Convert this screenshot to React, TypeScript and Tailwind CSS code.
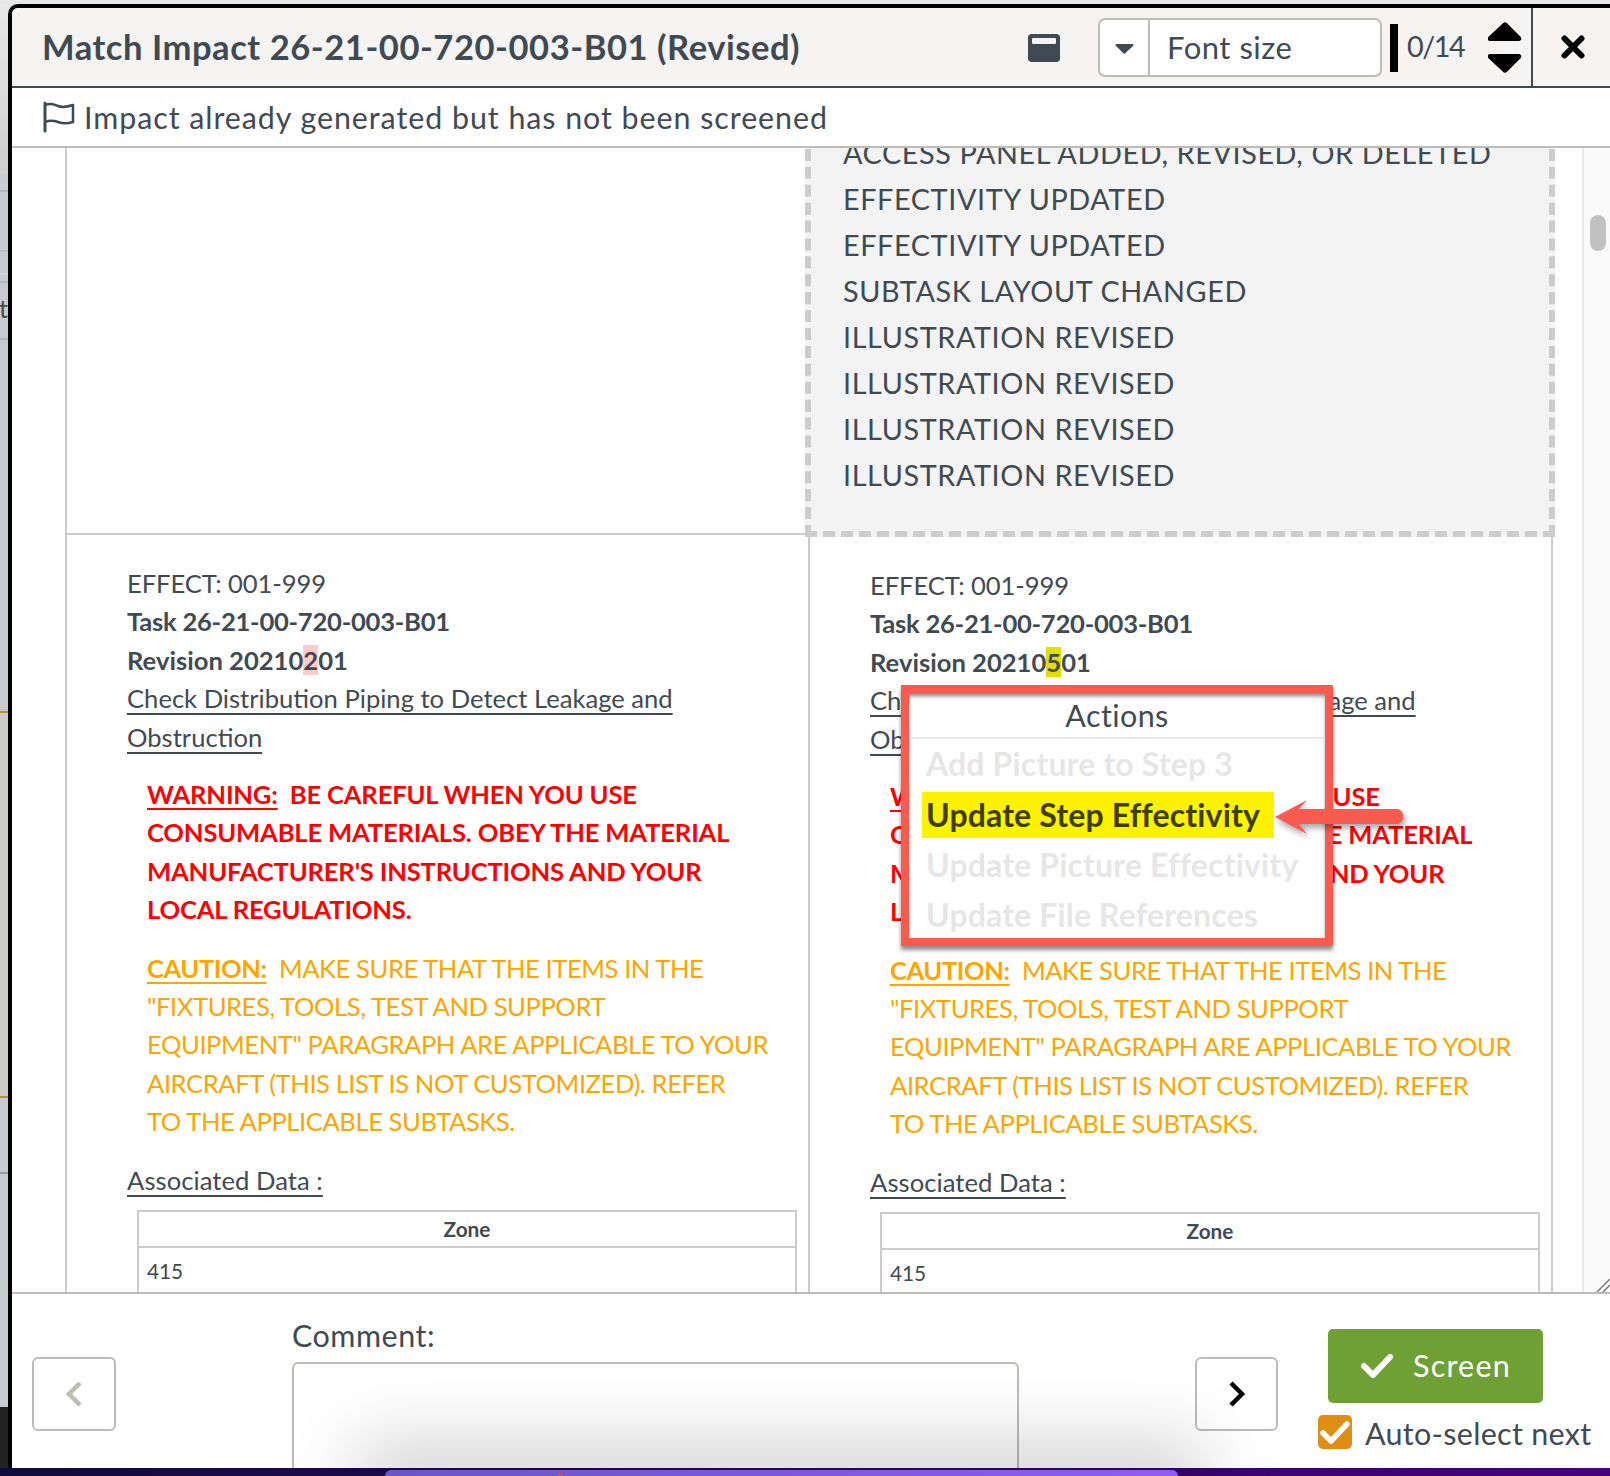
import React from "react";

const dark = "text-[#3f4a52]";

function CellBody({ digit, digitBg }: { digit: string; digitBg: string }) {
  return (
    <div className={`text-[25.6px] leading-[38.4px] ${dark}`}>
      <div className="pl-[60px]">
        <div className="tracking-[-0.1px]">EFFECT: 001-999</div>
        <div className="font-bold tracking-[-0.25px]">Task 26-21-00-720-003-B01</div>
        <div className="font-bold">
          Revision 20210<span className={digitBg}>{digit}</span>01
        </div>
        <div className="underline underline-offset-[5px] decoration-[2px] whitespace-nowrap">
          Check Distribution Piping to Detect Leakage and
          <br />
          Obstruction
        </div>
      </div>
      <div className="pl-[80px] mt-[19px] font-bold text-[#ff0000] whitespace-nowrap tracking-[-0.18px]">
        <span className="underline underline-offset-[4px] decoration-[2px]">WARNING:</span>
        &nbsp; BE CAREFUL WHEN YOU USE
        <br />
        CONSUMABLE MATERIALS. OBEY THE MATERIAL
        <br />
        MANUFACTURER'S INSTRUCTIONS AND YOUR
        <br />
        LOCAL REGULATIONS.
      </div>
      <div className="pl-[80px] mt-[20px] text-[#ffa500] whitespace-nowrap tracking-[-0.44px]">
        <span className="font-bold underline underline-offset-[4px] decoration-[2px]">CAUTION:</span>
        &nbsp; MAKE SURE THAT THE ITEMS IN THE
        <br />
        "FIXTURES, TOOLS, TEST AND SUPPORT
        <br />
        EQUIPMENT" PARAGRAPH ARE APPLICABLE TO YOUR
        <br />
        AIRCRAFT (THIS LIST IS NOT CUSTOMIZED). REFER
        <br />
        TO THE APPLICABLE SUBTASKS.
      </div>
      <div className="pl-[60px] mt-[20px] underline underline-offset-[5px] decoration-[2px] tracking-[0.05px]">Associated Data :</div>
      <div className="ml-[70px] mt-[11px] w-[660px] border-2 border-[#cccccc] text-[20.8px] leading-[33px]">
        <div className="text-center font-bold border-b-2 border-[#cccccc] h-[36px]">Zone</div>
        <div className="pl-[8px] pt-[6px] h-[80px]">415</div>
      </div>
    </div>
  );
}

function LeftStrip() {
  return (
    <div className="w-[8px] shrink-0 flex flex-col overflow-hidden bg-[#c9cacb] text-[25px] leading-[30px] text-[#4a4a4a]">
      <div className="h-[168px] bg-gradient-to-b from-[#e9e9e9] to-[#cdcecf] shrink-0" />
      <div className="h-[18px] border-t border-[#d8d8d8] shrink-0" />
      <div className="h-[60px] border-t-2 border-[#b5b5b5] shrink-0" />
      <div className="h-[23px] border-t-2 border-[#bdbdbd] shrink-0" />
      <div className="h-[8px] border-t border-[#d8d8d8] shrink-0" />
      <div className="h-[57px] border-t-2 border-[#b5b5b5] shrink-0 -ml-[7px] pt-[10px]">it</div>
      <div className="h-[373px] border-t-2 border-[#b5b5b5] shrink-0" />
      <div className="h-[385px] border-t-2 border-[#c08a3c] bg-[#cbcbc7] shrink-0 -ml-[14px] pt-[150px]">
        <div>2</div>
        <div className="text-[20px] leading-[24px] mt-[18px] text-[#777]">p</div>
      </div>
      <div className="h-[76px] border-t-2 border-[#c08a3c] shrink-0" />
      <div className="h-[235px] border-t-2 border-[#9a9a9a] shrink-0" />
      <div className="flex-1 bg-[#222222]" />
    </div>
  );
}

export default function App() {
  return (
    <div className="relative w-[1610px] h-[1476px] overflow-hidden flex flex-col bg-[#e6e6e6] pt-[4px] font-[Lato,sans-serif]">
      <div className="flex flex-1 min-h-0">
        <LeftStrip />
        <div className="flex-1 min-w-0 flex flex-col bg-white border-l-4 border-t-4 border-black rounded-tl-[10px] overflow-hidden">
          {/* header */}
          <div className="h-[80px] shrink-0 flex items-stretch bg-[#f5f4f2] border-b-2 border-[#3f4a52]">
            <div className={`pl-[30px] flex-1 flex items-center text-[34.6px] font-bold ${dark} tracking-[0.52px] whitespace-nowrap`}>
              Match Impact 26-21-00-720-003-B01 (Revised)
            </div>
            <div className="flex items-center w-[32px] shrink-0 pt-[2px]">
              <div className="w-[32px] h-[28px] rounded-[4px] bg-[#3f4a52] pt-[4px] px-[4px]">
                <div className="h-[6px] rounded-[1px] bg-[#f5f4f2]" />
              </div>
            </div>
            <div className="ml-[38px] mt-[10px] h-[59px] w-[284px] shrink-0 flex border-2 border-[#bdbcb7] rounded-[7px] bg-white">
              <div className="w-[50px] shrink-0 border-r-2 border-[#bdbcb7] flex items-center justify-center pt-[2px]">
                <svg width="19" height="11" viewBox="0 0 19 11"><path d="M1.5 1h16a1 1 0 0 1 .7 1.7L10 10.4a1 1 0 0 1-1.4 0L.8 2.7A1 1 0 0 1 1.5 1z" fill="#3f4a52" /></svg>
              </div>
              <div className={`pl-[17px] flex items-center text-[31px] ${dark} tracking-[0.5px]`}>Font size</div>
            </div>
            <div className="ml-[8px] mt-[16px] h-[48px] w-[8px] bg-black shrink-0" />
            <div className={`ml-[9px] w-[60px] flex items-center text-[28.8px] ${dark} shrink-0 tracking-[-1.5px]`}>0/14</div>
            <div className="ml-[21px] w-[34px] shrink-0 flex flex-col pt-[14px] gap-[11px]">
              <svg width="34" height="20" viewBox="0 0 34 20" className="block"><path d="M15 1.2a3 3 0 0 1 4 0l13.5 13.6c1.6 1.8.6 4.2-1.7 4.2H2.2C0 19-1 16.600 .5 14.800z" fill="#000" /></svg>
              <svg width="34" height="20" viewBox="0 0 34 20" className="block"><path d="M15 18.800a3 3 0 0 0 4 0L32.500 5.200C34.100 3.400 33.100 1 30.800 1H2.200C0 1-1 3.400 .5 5.200z" fill="#000" /></svg>
            </div>
            <div className="ml-[9px] w-[79px] border-l-2 border-[#3f4a52] shrink-0 flex items-center justify-center pl-[2px]">
              <svg width="24" height="24" viewBox="0 0 24 24"><path d="M3.500 3.500L20.500 20.500M20.500 3.500L3.500 20.500" stroke="#000" strokeWidth="6" strokeLinecap="round" /></svg>
            </div>
          </div>
          {/* sub bar */}
          <div className="h-[60px] shrink-0 flex items-center pl-[30px] border-b-2 border-[#bdbcb7] bg-white">
            <svg width="33" height="32" viewBox="0 0 33 32" fill="none" className="shrink-0">
              <path d="M3 2v28" stroke="#3f4a52" strokeWidth="3" strokeLinecap="round" />
              <path d="M3 4c5-2 8-1 13 1s9 1 15-1v17c-6 2-10 2-15 0s-8-2-13 0" stroke="#3f4a52" strokeWidth="2.500" strokeLinejoin="round" />
            </svg>
            <div className={`ml-[9px] pt-[2px] text-[30.4px] ${dark} tracking-[0.95px] whitespace-nowrap`}>
              Impact already generated but has not been screened
            </div>
          </div>
          {/* content */}
          <div className="flex-1 min-h-0 flex overflow-hidden bg-white">
            <div className="w-[55px] shrink-0 border-r-2 border-[#cccccc]" />
            <div className="w-[1486px] shrink-0 flex flex-col">
              <div className="h-[387px] shrink-0 flex border-b-2 border-[#cccccc]">
                <div className="w-[743px] shrink-0 border-r-2 border-[#cccccc]" />
                <div className="w-[743px] shrink-0 border-r-2 border-[#cccccc]">
                  <div className="-mt-[17px] -ml-[5px] -mr-[4px] h-[406px] bg-[#f3f3f3] border-[6px] border-dashed border-[#cccccc] pl-[32px] text-[28.8px] leading-[46px] text-[#3f4a52] tracking-[0.6px] whitespace-nowrap">
                    <div className="-mt-[7px]">ACCESS PANEL ADDED, REVISED, OR DELETED</div>
                    <div>EFFECTIVITY UPDATED</div>
                    <div>EFFECTIVITY UPDATED</div>
                    <div>SUBTASK LAYOUT CHANGED</div>
                    <div>ILLUSTRATION REVISED</div>
                    <div>ILLUSTRATION REVISED</div>
                    <div>ILLUSTRATION REVISED</div>
                    <div>ILLUSTRATION REVISED</div>
                  </div>
                </div>
              </div>
              <div className="flex flex-1 min-h-0">
                <div className="w-[743px] shrink-0 border-r-2 border-[#cccccc] pt-[29px]">
                  <CellBody digit="2" digitBg="bg-[#ffcccc]" />
                </div>
                <div className="w-[743px] shrink-0 border-r-2 border-[#cccccc] pt-[31px]">
                  <CellBody digit="5" digitBg="bg-[#e0e000]" />
                </div>
              </div>
            </div>
            <div className="w-[29px] shrink-0" />
            <div className="flex-1 border-l-2 border-[#eaeaea] bg-[#fafafa] pt-[67px] pl-[6px]">
              <div className="w-[16px] h-[36px] rounded-[8px] bg-[#c1c1c1]" />
            </div>
          </div>
          {/* footer */}
          <div className="h-[176px] shrink-0 flex items-start border-t-2 border-[#bdbcb7] bg-white overflow-hidden">
            <div className="ml-[20px] mt-[63px] w-[84px] h-[74px] shrink-0 border-2 border-[#bdbcb7] rounded-[6px] flex items-center justify-center">
              <svg width="18" height="28" viewBox="0 0 18 28" fill="none"><path d="M15 3L4 14l11 11" stroke="#bdbcb7" strokeWidth="4.500" /></svg>
            </div>
            <div className="ml-[176px] mt-[18px] w-[727px] shrink-0">
              <div className={`text-[30.5px] leading-[46px] ${dark} tracking-[0.5px]`}>Comment:</div>
              <div className="mt-[4px] h-[200px] border-2 border-[#bdbcb7] rounded-[6px]" />
            </div>
            <div className="ml-[176px] mt-[63px] w-[83px] h-[74px] shrink-0 border-2 border-[#bdbcb7] rounded-[6px] flex items-center justify-center">
              <svg width="18" height="28" viewBox="0 0 18 28" fill="none"><path d="M3 3l11 11L3 25" stroke="#000" strokeWidth="4.500" /></svg>
            </div>
            <div className="ml-[40px] mt-[35px] shrink-0 flex flex-col">
              <div className="ml-[10px] w-[215px] h-[74px] rounded-[5px] bg-[#6fa033] flex items-center pl-[33px] text-white">
                <svg width="32" height="24" viewBox="0 0 32 24" fill="none"><path d="M3 12l9 9L29 3" stroke="#fff" strokeWidth="6" strokeLinejoin="round" strokeLinecap="round" /></svg>
                <span className="ml-[20px] text-[30.5px] tracking-[1.2px]">Screen</span>
              </div>
              <div className="mt-[10px] flex items-center">
                <div className="w-[34px] h-[34px] rounded-[5px] bg-[#e08e14] flex items-center justify-center">
                  <svg width="30" height="24" viewBox="0 0 30 24" fill="none"><path d="M3 13l8 8L27 4" stroke="#fff" strokeWidth="5.500" strokeLinejoin="round" strokeLinecap="round" /></svg>
                </div>
                <span className={`ml-[13px] pt-[3px] text-[30.5px] leading-[34px] ${dark} tracking-[0.3px] whitespace-nowrap`}>Auto-select next</span>
              </div>
            </div>
          </div>
        </div>
      </div>
      {/* taskbar */}
      <div className="relative h-[8px] shrink-0 bg-gradient-to-r from-[#0f0a3c] via-[#2c0566] to-[#47007d]">
        <div className="absolute left-[385px] top-[2px] w-[793px] h-[8px] rounded-t-[6px] bg-gradient-to-r from-[#6a55c4] to-[#8f5cf0] shadow-[0_0_70px_30px_rgba(0,0,0,0.18)]" />
        <div className="absolute left-[558px] top-[6px] w-[5px] h-[3px] bg-[#e0503c]" />
      </div>

      {/* resize handle */}
      <svg className="absolute left-[1596px] top-[1278px]" width="14" height="14" viewBox="0 0 14 14" fill="none">
        <path d="M1 14L14 1M7 14L14 7" stroke="#777" strokeWidth="1.500" />
      </svg>

      {/* actions popover annotation */}
      <div className="absolute left-[901px] top-[685px] w-[432px] h-[261px] border-[8px] border-[#fb5a4e] bg-white shadow-[0_4px_4px_rgba(0,0,0,0.45),inset_0_4px_4px_-1px_rgba(0,0,0,0.5)] flex flex-col">
        <div className={`h-[46px] shrink-0 border-b-2 border-[#e8e8e8] text-center text-[30.5px] leading-[44px] ${dark} tracking-[0.4px]`}>Actions</div>
        <div className="pl-[17px] text-[32px] leading-[50px] font-bold text-[#e6e6e6] whitespace-nowrap tracking-[0.15px]">
          <div>Add Picture to Step 3</div>
          <div className="-ml-[4px] w-[352px] h-[46px] bg-[#fff200] pl-[4px] leading-[46px] text-[#3e3f00] mt-[3px]">Update Step Effectivity</div>
          <div className="mt-[2px]">Update Picture Effectivity</div>
          <div>Update File References</div>
        </div>
      </div>
      <svg className="absolute left-[1272px] top-[796px] drop-shadow-[2px_4px_3px_rgba(0,0,0,0.35)]" width="134" height="42" viewBox="0 0 134 42" fill="#fb5a4e">
        <path d="M3 21L35 4l-8 9h99a8 8 0 0 1 0 15H27l8 10z" />
      </svg>
    </div>
  );
}
